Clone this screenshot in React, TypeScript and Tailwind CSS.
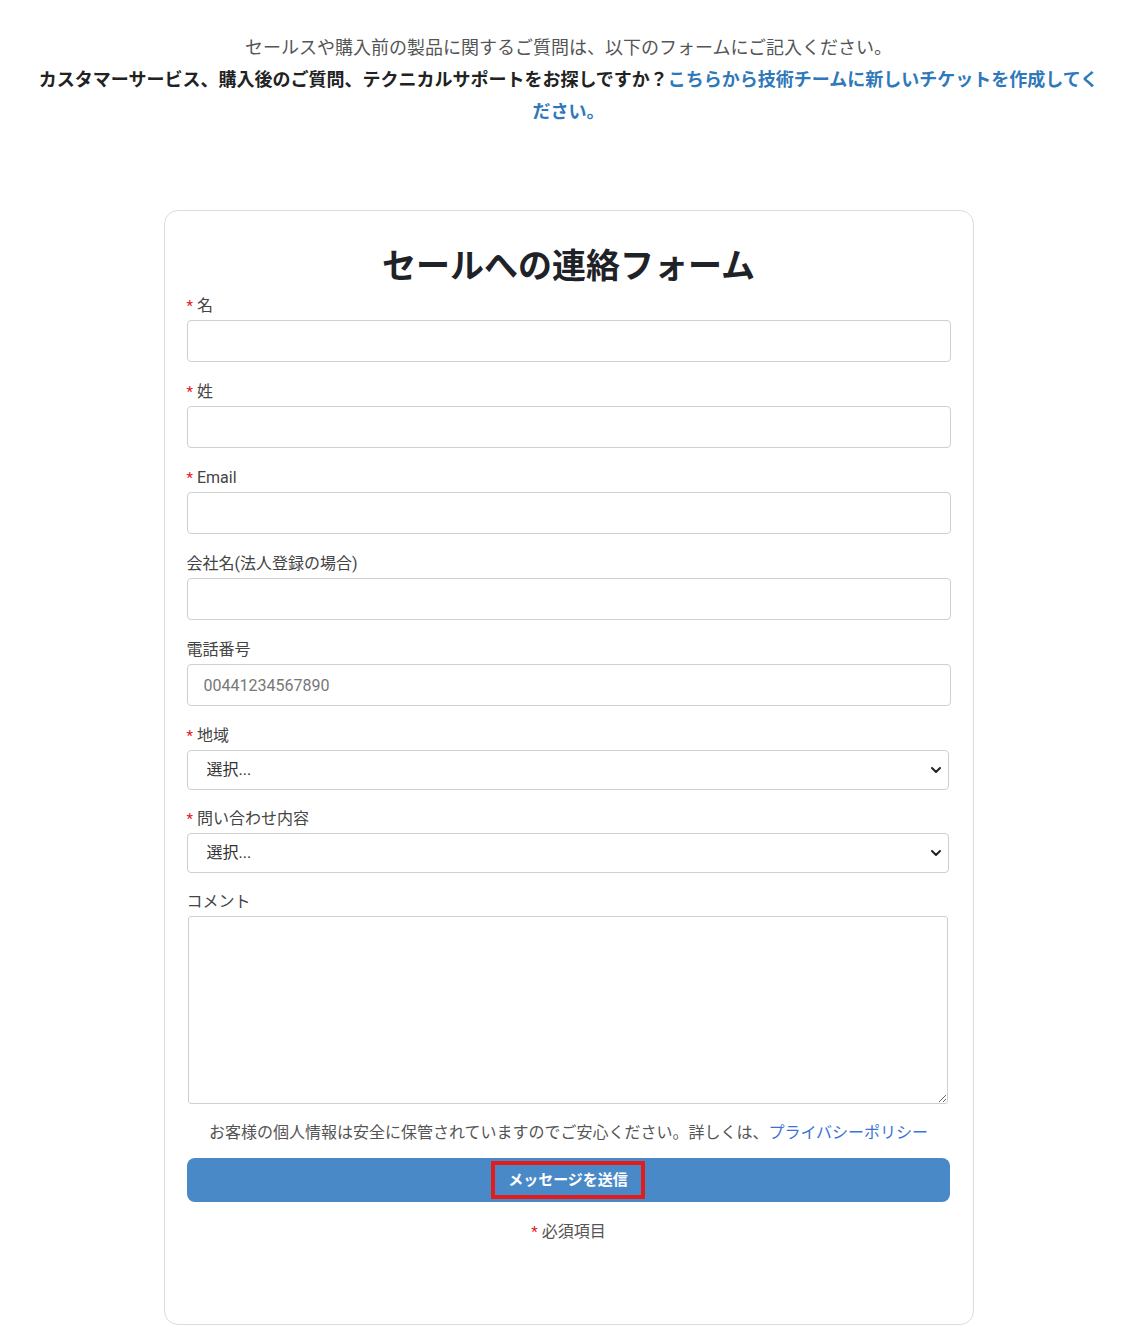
import { ChevronDown } from "lucide-react";

const font = "font-['Roboto','Noto_Sans_CJK_JP',sans-serif]";

type FieldProps = {
  label: string;
  required?: boolean;
  placeholder?: string;
};

const Label = ({ label, required }: { label: string; required?: boolean }) => (
  <label className="block h-6 text-[16px] leading-6 text-[#444]">
    {required && <span className="mr-1 text-[15px] text-[#e4141b]">*</span>}
    {label}
  </label>
);

const TextField = ({ label, required, placeholder }: FieldProps) => (
  <div className="mb-[18px]">
    <Label label={label} required={required} />
    <input
      type="text"
      placeholder={placeholder}
      className="mt-[2px] block h-[42px] w-full rounded-[4px] border border-[#cfcfcf] bg-white px-4 text-[16px] text-[#333] placeholder:text-[#777] focus:outline-none"
    />
  </div>
);

const SelectField = ({ label, required }: FieldProps) => (
  <div className="mb-[17px]">
    <Label label={label} required={required} />
    <div className="relative mt-[2px] w-[762px]">
      <select className="block h-10 w-full appearance-none rounded-[4px] border border-[#cfcfcf] bg-white pl-[19px] text-[16px] text-[#333] focus:outline-none">
        <option>選択...</option>
      </select>
      <ChevronDown
        size={16}
        strokeWidth={3}
        className="pointer-events-none absolute top-1/2 right-[5px] -translate-y-1/2 text-[#222]"
      />
    </div>
  </div>
);

const App = () => {
  return (
    <div className={`${font} min-h-screen w-[1137px] bg-white pt-8 pb-3`}>
      <div className="mx-auto w-[1070px] text-center">
        <p className="text-[18px] leading-8 text-[#555]">
          セールスや購入前の製品に関するご質問は、以下のフォームにご記入ください。
        </p>
        <p className="text-[18px] leading-8 font-bold text-[#222]">
          カスタマーサービス、購入後のご質問、テクニカルサポートをお探しですか？
          <a href="#" className="text-[#2f79ba]">
            こちらから技術チームに新しいチケットを作成してください。
          </a>
        </p>
      </div>

      <div className="mx-auto mt-[82px] w-[810px] rounded-[14px] border border-[#dcdcdc] px-[22px] pt-[34px] pb-[80px]">
        <h1 className="mb-[6px] text-center text-[34px] leading-[43px] font-bold text-[#1f2328]">
          セールへの連絡フォーム
        </h1>

        <form>
          <TextField label="名" required />
          <TextField label="姓" required />
          <TextField label="Email" required />
          <TextField label="会社名(法人登録の場合)" />
          <TextField label="電話番号" placeholder="00441234567890" />
          <SelectField label="地域" required />
          <SelectField label="問い合わせ内容" required />

          <div>
            <Label label="コメント" />
            <textarea className="mt-[2px] ml-px block h-[188px] w-[760px] rounded-[3px] border border-[#cfcfcf] bg-white focus:outline-none" />
          </div>

          <p className="mt-[17px] text-center text-[16px] leading-6 text-[#555]">
            お客様の個人情報は安全に保管されていますのでご安心ください。詳しくは、
            <a href="#" className="text-[#3a73d6]">
              プライバシーポリシー
            </a>
          </p>

          <button
            type="button"
            className="mt-[13px] flex h-11 w-[763px] items-center justify-center rounded-[8px] bg-[#4a89c8]"
          >
            <span className="border-4 border-[#e31b1b] px-[13px] text-[15px] leading-[30px] font-bold text-white">
              メッセージを送信
            </span>
          </button>

          <p className="mt-[18px] text-center text-[16px] leading-6 text-[#555]">
            <span className="mr-1 text-[15px] text-[#e4141b]">*</span>
            必須項目
          </p>
        </form>
      </div>
    </div>
  );
};

export default App;
